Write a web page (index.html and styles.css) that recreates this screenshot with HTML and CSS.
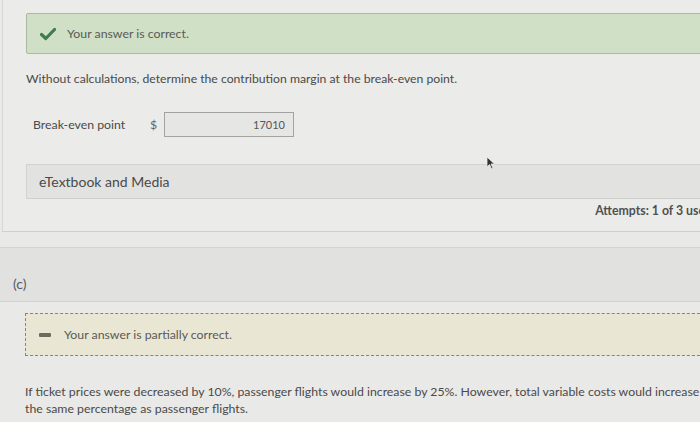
FILE: index.html
```html
<!DOCTYPE html>
<html>
<head>
<meta charset="utf-8">
<link rel="stylesheet" href="styles.css">
</head>
<body>
<div class="page">
  <section class="panel">
    <div class="alert alert-correct">
      <svg class="icon" width="16" height="14" viewBox="0 0 16 14"><path d="M1.5 7.5 L5.8 11.5 L14.5 2.5" fill="none" stroke="#3f7d4c" stroke-width="3.2" stroke-linecap="round" stroke-linejoin="round"/></svg>
      <span>Your answer is correct.</span>
    </div>
    <p class="question">Without calculations, determine the contribution margin at the break-even point.</p>
    <div class="answer-row">
      <span class="label">Break-even point</span>
      <span class="currency">$</span>
      <div class="input">17010</div>
    </div>
    <div class="media-bar">eTextbook and Media</div>
    <div class="attempts">Attempts: 1 of 3 used</div>
  </section>
  <section class="part-header">(c)</section>
  <div class="alert alert-partial">
    <svg class="icon" width="14" height="6" viewBox="0 0 14 6"><rect x="1" y="1" width="12" height="4" rx="1" fill="#6b6b62"/></svg>
    <span>Your answer is partially correct.</span>
  </div>
  <p class="body-text">If ticket prices were decreased by 10%, passenger flights would increase by 25%. However, total variable costs would increase by<br>the same percentage as passenger flights.</p>
  <svg class="cursor" width="10" height="14" viewBox="0 0 10 14"><path d="M1 1 L1 11 L3.5 8.5 L5.5 13 L7 12.3 L5 8 L8.5 8 Z" fill="#333" stroke="#eee" stroke-width="0.8"/></svg>
</div>
</body>
</html>
```
FILE: styles.css
```css
html, body {
  margin: 0;
  padding: 0;
}
body {
  width: 700px;
  height: 422px;
  overflow: hidden;
  background: #e9e9e7;
  font-family: Lato, "Open Sans", sans-serif;
  color: #4f4f4f;
}
.page {
  position: relative;
  width: 700px;
  height: 422px;
  overflow: hidden;
}
.panel {
  margin-left: 2px;
  height: 218px;
  padding: 13px 0 0 23px;
  background: #ebebe9;
  border-left: 1px solid #d6d6d4;
  border-bottom: 1px solid #cfcfcd;
}
.alert {
  display: flex;
  align-items: center;
  box-sizing: border-box;
  font-size: 12.3px;
  color: #5a5a55;
}
.alert-correct {
  gap: 11px;
  height: 41px;
  margin-right: -12px;
  padding-left: 13px;
  background: #cfe0c6;
  border: 1px solid #a9b9a2;
  border-radius: 2px;
}
.question {
  margin: 17px 0 0;
  font-size: 12.2px;
  line-height: 16px;
  color: #4a4a4a;
}
.answer-row {
  display: flex;
  align-items: center;
  margin-top: 25px;
  height: 25px;
  font-size: 12.3px;
  color: #4a4a4a;
}
.label {
  margin-left: 7px;
  width: 117px;
}
.currency {
  width: 14px;
  color: #666;
}
.input {
  box-sizing: border-box;
  width: 130px;
  height: 25px;
  padding-right: 8px;
  display: flex;
  align-items: center;
  justify-content: flex-end;
  background: #e6e6e4;
  border: 1px solid #a3a3a1;
  font-size: 11px;
  color: #555;
}
.media-bar {
  margin-top: 27px;
  margin-right: -4px;
  box-sizing: border-box;
  height: 35px;
  padding-left: 12px;
  display: flex;
  align-items: center;
  background: #e2e2e0;
  border-top: 1px solid #d2d2d0;
  border-left: 1px solid #d2d2d0;
  border-bottom: 1px solid #cfcfcd;
  font-size: 14px;
  color: #4a4a4a;
}
.attempts {
  display: flex;
  justify-content: flex-end;
  margin-top: 4px;
  margin-right: -12px;
  font-size: 12.3px;
  font-weight: 700;
  color: #505050;
  white-space: nowrap;
}
.part-header {
  margin-top: 15px;
  height: 55px;
  box-sizing: border-box;
  padding: 27px 0 0 13px;
  background: #e1e1df;
  border-top: 1px solid #d2d2d0;
  border-bottom: 1px solid #d2d2d0;
  font-size: 14px;
  color: #555a6a;
}
.alert-partial {
  gap: 12px;
  margin: 11px -10px 0 25px;
  height: 43px;
  padding-left: 12px;
  background: #e9e7d3;
  border: 1.5px dashed #85857c;
}
.body-text {
  margin: 27px 0 0 25px;
  font-size: 12.3px;
  line-height: 17px;
  white-space: nowrap;
  color: #4a4a4a;
}
.cursor {
  position: absolute;
  left: 486px;
  top: 156px;
}
```
